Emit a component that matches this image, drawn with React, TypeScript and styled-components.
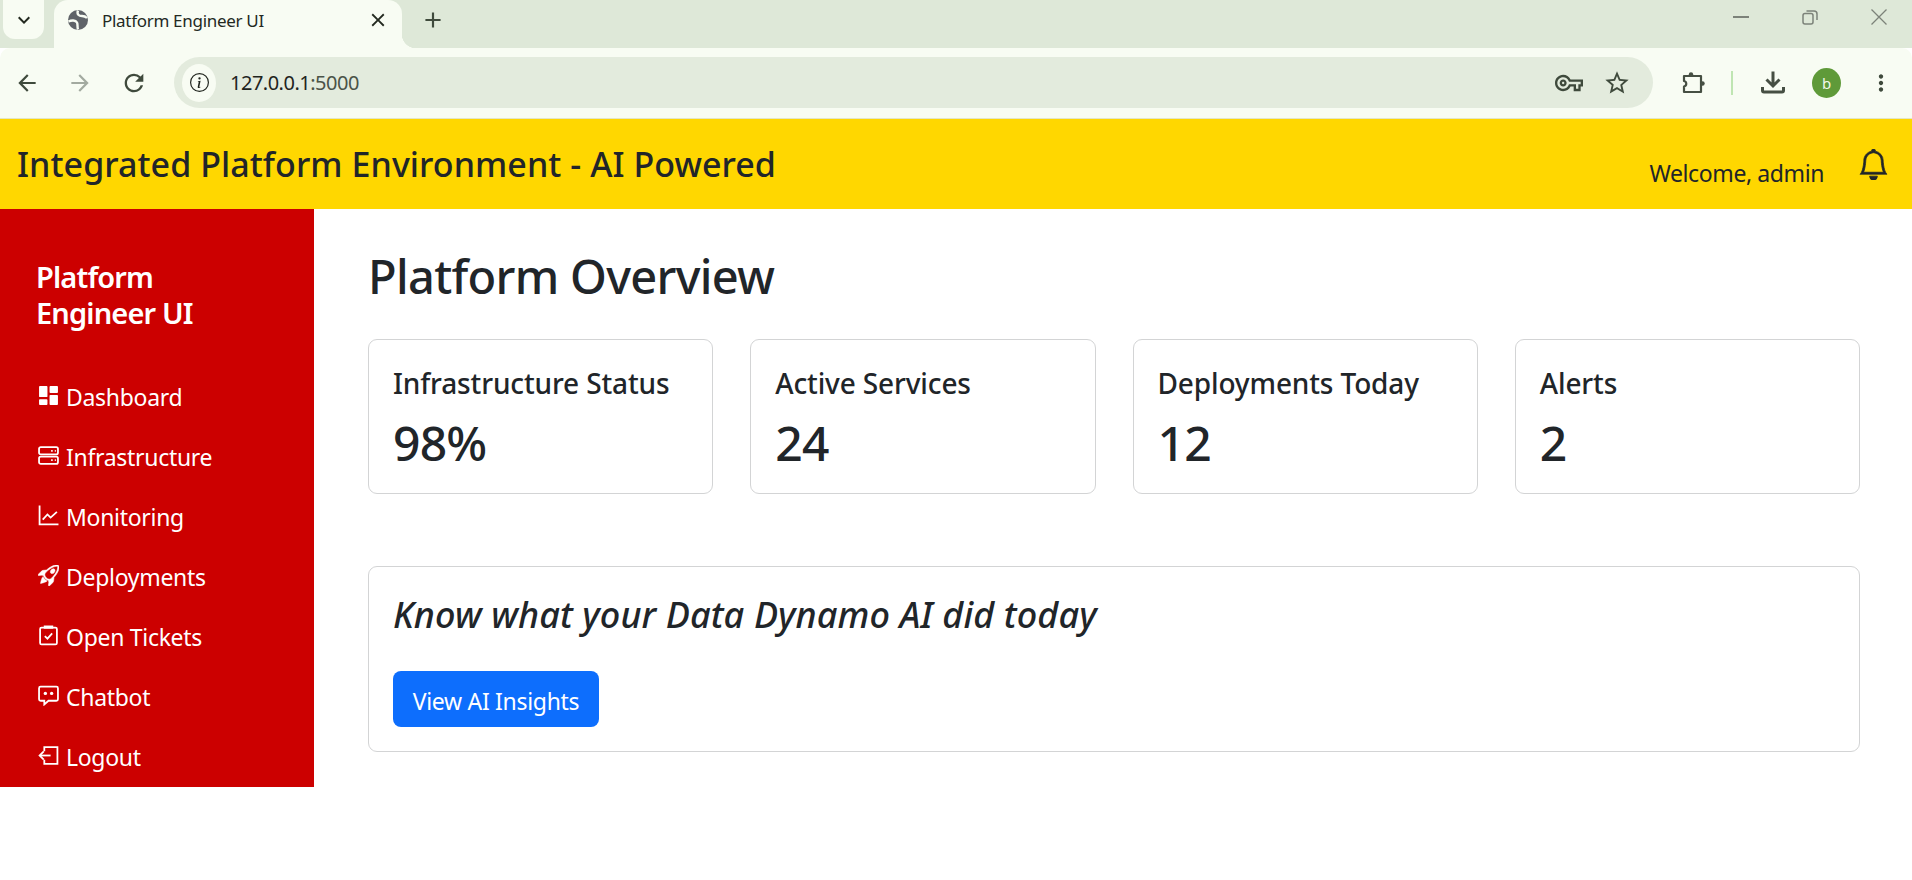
import React from 'react';
import styled, { createGlobalStyle } from 'styled-components';
import { BsBell, BsInfoCircle, BsRocketTakeoff } from 'react-icons/bs';
import {
  MdAdd,
  MdArrowBack,
  MdArrowForward,
  MdClose,
  MdKeyboardArrowDown,
  MdMoreVert,
  MdOutlineVpnKey,
  MdRefresh,
  MdStarBorder,
} from 'react-icons/md';

const GlobalStyle = createGlobalStyle`
  html, body {
    margin: 0;
    padding: 0;
    background: #fff;
  }

  body {
    font-family: 'Noto Sans', 'Open Sans', 'Liberation Sans', sans-serif;
    color: #212529;
    overflow: hidden;
  }

  * {
    box-sizing: border-box;
  }
`;

const GlobeIcon = () => (
  <svg width="22" height="22" viewBox="0 0 22 22" fill="none">
    <circle cx="11" cy="11" r="10" fill="#5f6368" />
    <path d="M11 1.5c-1.5 4 1 5.5 4 5.5 2 0 3.5.5 5 2" stroke="#f8fcf3" strokeWidth="2.4" />
    <path d="M1.5 12.5c3-1.5 7-1.5 8.5 1 1 1.800 0 4 1 7" stroke="#f8fcf3" strokeWidth="2.4" />
  </svg>
);

const PuzzleIcon = () => (
  <svg width="24" height="24" viewBox="0 0 24 24" fill="none" stroke="#464f43" strokeWidth="2.2" strokeLinejoin="round">
    <path d="M3 5h17v16H3v-5.500a2.800 2.800 0 0 0 0-5.500z" />
    <circle cx="10" cy="3.500" r="2.200" fill="#464f43" stroke="none" />
    <circle cx="21.500" cy="12.500" r="2.200" fill="#464f43" stroke="none" />
  </svg>
);

const DownloadIcon = () => (
  <svg width="24" height="24" viewBox="0 0 24 24" fill="none" stroke="#464f43" strokeWidth="3">
    <path d="M12 0.500v14M5.500 8.500L12 15l6.500-6.500" />
    <path d="M1.500 16v3.500a1.500 1.500 0 0 0 1.500 1.500h18a1.500 1.500 0 0 0 1.500-1.500V16" />
  </svg>
);

const DashboardIcon = () => (
  <svg width="21" height="21" viewBox="0 0 20 20" fill="currentColor">
    <rect x="1" y="1" width="8" height="10.500" rx="0.800" />
    <rect x="11" y="1" width="8" height="6.500" rx="0.800" />
    <rect x="1" y="13.500" width="8" height="5.500" rx="0.800" />
    <rect x="11" y="9.500" width="8" height="9.500" rx="0.800" />
  </svg>
);

const ServerIcon = () => (
  <svg width="21" height="21" viewBox="0 0 20 20" fill="none" stroke="currentColor" strokeWidth="1.700">
    <rect x="1" y="2" width="18" height="7" rx="1.600" />
    <rect x="1" y="11" width="18" height="7" rx="1.600" />
    <path d="M12.500 5.500h1.500M16 5.500h1M12.500 14.500h1.500M16 14.500h1" />
  </svg>
);

const GraphIcon = () => (
  <svg width="21" height="21" viewBox="0 0 20 20" fill="none" stroke="currentColor" strokeWidth="1.700">
    <path d="M1.500 0.500v18h18" />
    <path d="M4.500 14l4.500-5 3 3 6-5.500" />
  </svg>
);

const TicketIcon = () => (
  <svg width="21" height="21" viewBox="0 0 20 20" fill="none" stroke="currentColor" strokeWidth="1.700">
    <rect x="2" y="2.500" width="16" height="16" rx="1.400" />
    <rect x="5.500" y="0.500" width="9" height="3" fill="currentColor" stroke="none" />
    <path d="M6.500 10.500l2.500 2.500 4.500-5" />
  </svg>
);

const ChatIcon = () => (
  <svg width="21" height="21" viewBox="0 0 20 20" fill="none" stroke="currentColor" strokeWidth="1.700">
    <path d="M2.500 1.500h15a1.500 1.500 0 0 1 1.500 1.500v10.500a1.500 1.500 0 0 1-1.500 1.500H10l-4 3.500V15H2.500A1.500 1.500 0 0 1 1 13.500V3a1.500 1.500 0 0 1 1.500-1.500z" />
    <circle cx="7" cy="8" r="1.600" fill="currentColor" stroke="none" />
    <circle cx="13" cy="8" r="1.600" fill="currentColor" stroke="none" />
  </svg>
);

const LogoutIcon = () => (
  <svg width="21" height="21" viewBox="0 0 20 20" fill="none" stroke="currentColor" strokeWidth="1.700">
    <path d="M6 6V2h12.500v16H6v-4" />
    <path d="M12 10H2" />
    <path d="M5.500 6L1.500 10l4 4" />
  </svg>
);

const RocketIcon = () => <BsRocketTakeoff size={21} strokeWidth={0.4} stroke="currentColor" />;

const navItems = [
  { label: 'Dashboard', Icon: DashboardIcon },
  { label: 'Infrastructure', Icon: ServerIcon },
  { label: 'Monitoring', Icon: GraphIcon },
  { label: 'Deployments', Icon: RocketIcon },
  { label: 'Open Tickets', Icon: TicketIcon },
  { label: 'Chatbot', Icon: ChatIcon },
  { label: 'Logout', Icon: LogoutIcon },
];

const stats = [
  { title: 'Infrastructure Status', value: '98%' },
  { title: 'Active Services', value: '24' },
  { title: 'Deployments Today', value: '12' },
  { title: 'Alerts', value: '2' },
];

const App = () => {
  return (
    <Page>
      <GlobalStyle />

      <TabStrip>
        <TabSearch>
          <MdKeyboardArrowDown size={24} />
        </TabSearch>
        <Tab>
          <GlobeIcon />
          <TabTitle>Platform Engineer UI</TabTitle>
          <MdClose size={22} color="#23291f" />
        </Tab>
        <NewTab>
          <MdAdd size={26} />
        </NewTab>
        <WindowControls>
          <Minimize />
          <svg width="16" height="15" viewBox="0 0 16 15" fill="none" stroke="#7c8279" strokeWidth="1.500">
            <rect x="1" y="3.500" width="10" height="10.500" rx="2" />
            <path d="M4.500 1h7.500a3 3 0 0 1 3 3v6" />
          </svg>
          <svg width="16" height="16" viewBox="0 0 16 16" stroke="#7c8279" strokeWidth="1.300">
            <path d="M0.500 0.500l15 15M15.500 0.500l-15 15" />
          </svg>
        </WindowControls>
      </TabStrip>

      <Toolbar>
        <NavButtons>
          <MdArrowBack size={26} color="#3f4a3c" />
          <MdArrowForward size={26} color="#a3aaa0" />
          <MdRefresh size={28} color="#3f4a3c" />
        </NavButtons>
        <Omnibox>
          <SiteInfo>
            <BsInfoCircle size={19} color="#1f241d" />
          </SiteInfo>
          <Url>
            127.0.0.1<UrlPort>:5000</UrlPort>
          </Url>
          <OmniIcons>
            <MdOutlineVpnKey size={28} color="#3f4a3c" />
            <MdStarBorder size={28} color="#3f4a3c" />
          </OmniIcons>
        </Omnibox>
        <ToolbarActions>
          <PuzzleIcon />
          <Divider />
          <DownloadIcon />
          <Avatar>b</Avatar>
          <MdMoreVert size={26} color="#3f4a3c" />
        </ToolbarActions>
      </Toolbar>

      <Header>
        <HeaderTitle>Integrated Platform Environment - AI Powered</HeaderTitle>
        <HeaderUser>
          <Welcome>Welcome, admin</Welcome>
          <BsBell size={31} color="#212529" strokeWidth={0.4} stroke="currentColor" />
        </HeaderUser>
      </Header>

      <Body>
        <Sidebar>
          <Brand>Platform Engineer UI</Brand>
          <Nav>
            {navItems.map(({ label, Icon }) => (
              <NavLink key={label}>
                <Icon />
                {label}
              </NavLink>
            ))}
          </Nav>
        </Sidebar>

        <Main>
          <PageTitle>Platform Overview</PageTitle>
          <StatGrid>
            {stats.map((stat) => (
              <StatCard key={stat.title}>
                <StatTitle>{stat.title}</StatTitle>
                <StatValue>{stat.value}</StatValue>
              </StatCard>
            ))}
          </StatGrid>
          <InsightCard>
            <InsightTitle>Know what your Data Dynamo AI did today</InsightTitle>
            <PrimaryButton>View AI Insights</PrimaryButton>
          </InsightCard>
        </Main>
      </Body>
    </Page>
  );
};

export default App;

const Page = styled.div`
  width: 1912px;
  height: 880px;
  display: flex;
  flex-direction: column;
  overflow: hidden;
`;

const TabStrip = styled.div`
  height: 48px;
  background: #dee8d8;
  display: flex;
  align-items: flex-start;
  color: #3f4a3c;
`;

const TabSearch = styled.div`
  width: 41px;
  height: 39px;
  margin-left: 3px;
  border-radius: 0 0 12px 12px;
  background: #f8fcf3;
  display: flex;
  align-items: center;
  justify-content: center;
  color: #23291f;
`;

const Tab = styled.div`
  position: relative;
  width: 348px;
  height: 48px;
  margin-left: 10px;
  padding: 0 13px 8px 13px;
  background: #f8fcf3;
  border-radius: 14px 14px 0 0;
  display: flex;
  align-items: center;
  color: #23291f;

  &::after {
    content: '';
    position: absolute;
    right: -14px;
    bottom: 0;
    width: 14px;
    height: 14px;
    background: radial-gradient(circle at 100% 0, transparent 14px, #f8fcf3 14.5px);
  }
`;

const TabTitle = styled.span`
  flex: 1;
  margin-left: 13px;
  font-size: 17px;
  letter-spacing: -0.3px;
  white-space: nowrap;
`;

const NewTab = styled.div`
  margin-left: 18px;
  height: 39px;
  display: flex;
  align-items: center;
`;

const WindowControls = styled.div`
  margin-left: auto;
  margin-right: 25px;
  height: 34px;
  display: flex;
  align-items: center;
  gap: 53px;
`;

const Minimize = styled.span`
  width: 16px;
  height: 2px;
  background: #7c8279;
`;

const Toolbar = styled.div`
  height: 71px;
  background: #f8fcf3;
  border-bottom: 1px solid #e3e6c4;
  border-radius: 10px 10px 0 0;
  display: flex;
  align-items: center;
  padding-bottom: 1px;
`;

const NavButtons = styled.div`
  width: 174px;
  padding-left: 14px;
  display: flex;
  align-items: center;
  gap: 27px;
`;

const Omnibox = styled.div`
  width: 1479px;
  height: 51px;
  border-radius: 26px;
  background: #e3ebdd;
  display: flex;
  align-items: center;
  padding-left: 8px;
`;

const SiteInfo = styled.div`
  width: 34px;
  height: 38px;
  border-radius: 50%;
  background: #f8fcf3;
  display: flex;
  align-items: center;
  justify-content: center;
`;

const Url = styled.span`
  margin-left: 14px;
  font-size: 20px;
  letter-spacing: -0.5px;
  color: #1f241d;
`;

const UrlPort = styled.span`
  color: #4b5348;
`;

const OmniIcons = styled.div`
  margin-left: auto;
  margin-right: 22px;
  display: flex;
  align-items: center;
  gap: 20px;
`;

const ToolbarActions = styled.div`
  flex: 1;
  padding-left: 28px;
  display: flex;
  align-items: center;
`;

const Divider = styled.span`
  width: 2px;
  height: 24px;
  margin: 0 28px 0 26px;
  background: #bfe5b2;
`;

const Avatar = styled.span`
  width: 29px;
  height: 30px;
  margin: 0 27px 0 27px;
  border-radius: 50%;
  background: #5f9a39;
  color: #f2f8ea;
  font-size: 15px;
  display: flex;
  align-items: center;
  justify-content: center;
`;

const Header = styled.header`
  height: 90px;
  background: #ffd700;
  display: flex;
  align-items: center;
  justify-content: space-between;
  padding: 0 23px 0 17px;
`;

const HeaderTitle = styled.div`
  font-size: 34px;
  font-weight: 500;
  letter-spacing: 0.06px;
`;

const HeaderUser = styled.div`
  display: flex;
  align-items: center;
  gap: 34px;
`;

const Welcome = styled.span`
  font-size: 23px;
  letter-spacing: -0.4px;
  margin-top: 17px;
`;

const Body = styled.div`
  flex: 1;
  display: flex;
  align-items: flex-start;
`;

const Sidebar = styled.aside`
  width: 314px;
  height: 578px;
  flex-shrink: 0;
  background: #cc0000;
  color: #fff;
  padding: 50px 24px 0 36px;
`;

const Brand = styled.div`
  font-size: 29px;
  font-weight: 600;
  line-height: 36px;
  letter-spacing: -0.85px;
  width: 200px;
`;

const Nav = styled.nav`
  margin-top: 36px;
  display: flex;
  flex-direction: column;
`;

const NavLink = styled.a`
  height: 60px;
  display: flex;
  align-items: center;
  gap: 7px;
  padding-left: 2px;
  font-size: 23px;
  letter-spacing: -0.3px;
  color: #fff;

  svg {
    margin-top: -4px;
    flex-shrink: 0;
  }
`;

const Main = styled.main`
  flex: 1;
  padding: 36px 52px 0 54px;
`;

const PageTitle = styled.h1`
  margin: 0;
  height: 94px;
  font-size: 47px;
  line-height: 62px;
  font-weight: 500;
  letter-spacing: -0.7px;
`;

const StatGrid = styled.div`
  display: grid;
  grid-template-columns: repeat(4, 1fr);
  gap: 37px;
`;

const StatCard = styled.div`
  height: 155px;
  padding: 24px;
  border: 1px solid #d3d4d5;
  border-radius: 9px;
`;

const StatTitle = styled.h4`
  margin: 0;
  font-size: 28px;
  line-height: 38px;
  font-weight: 500;
  letter-spacing: -0.13px;
`;

const StatValue = styled.div`
  margin-top: 10px;
  font-size: 48px;
  line-height: 62px;
  font-weight: 500;
  letter-spacing: -0.8px;
`;

const InsightCard = styled.section`
  height: 186px;
  margin-top: 72px;
  padding: 24px;
  border: 1px solid #d3d4d5;
  border-radius: 9px;
`;

const InsightTitle = styled.h3`
  margin: 0 0 32px;
  font-size: 36px;
  line-height: 48px;
  font-weight: 500;
  font-style: italic;
  letter-spacing: 0.1px;
`;

const PrimaryButton = styled.button`
  width: 206px;
  height: 56px;
  padding: 3px 0 0;
  border: none;
  border-radius: 8px;
  background: #0d6efd;
  color: #fff;
  font-family: inherit;
  font-size: 23px;
  letter-spacing: -0.3px;
`;
